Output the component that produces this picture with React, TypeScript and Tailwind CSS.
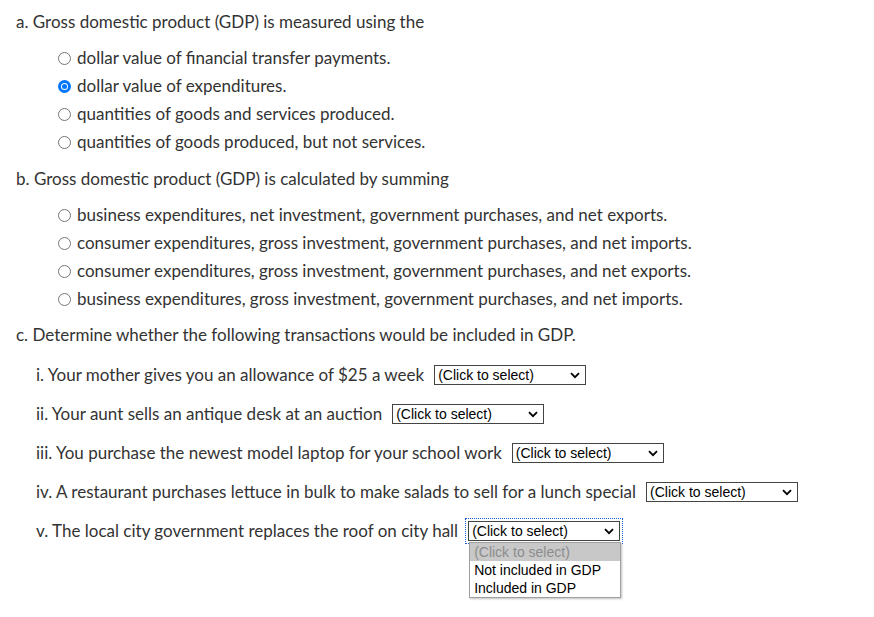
import type { ReactNode } from "react"

const partA = [
  "dollar value of financial transfer payments.",
  "dollar value of expenditures.",
  "quantities of goods and services produced.",
  "quantities of goods produced, but not services.",
]

const partB = [
  "business expenditures, net investment, government purchases, and net exports.",
  "consumer expenditures, gross investment, government purchases, and net imports.",
  "consumer expenditures, gross investment, government purchases, and net exports.",
  "business expenditures, gross investment, government purchases, and net imports.",
]

const partC = [
  "i. Your mother gives you an allowance of $25 a week",
  "ii. Your aunt sells an antique desk at an auction",
  "iii. You purchase the newest model laptop for your school work",
  "iv. A restaurant purchases lettuce in bulk to make salads to sell for a lunch special",
  "v. The local city government replaces the roof on city hall",
]

/** 单选圆点 */
function Radio({ checked }: { checked?: boolean }) {
  return checked ? (
    <span className="inline-flex w-[13px] h-[13px] rounded-full bg-[#0075ff] items-center justify-center shrink-0">
      <span className="w-[7px] h-[7px] rounded-full bg-white flex items-center justify-center">
        <span className="w-[5px] h-[5px] rounded-full bg-[#0075ff]" />
      </span>
    </span>
  ) : (
    <span className="inline-block w-[13px] h-[13px] rounded-full border border-[#767676] bg-white shrink-0" />
  )
}

function Chevron() {
  return (
    <svg width="10" height="7" viewBox="0 0 10 7" className="shrink-0">
      <path d="M1 1.2 L5 5.2 L9 1.2" fill="none" stroke="#000" strokeWidth="1.8" />
    </svg>
  )
}

/** 模拟原生下拉框 */
function Select({ focused, children }: { focused?: boolean; children?: ReactNode }) {
  const box = (
    <div className="w-[152px] h-[20px] border border-[#444] bg-white flex items-center justify-between pl-[3px] pr-[5px] text-[14px] text-black leading-none font-['Liberation_Sans',Arial,sans-serif]">
      <span>(Click to select)</span>
      <Chevron />
    </div>
  )
  if (!focused) return box
  return (
    <div className="relative">
      <div className="outline outline-1 outline-dotted outline-[#1a5fd0] outline-offset-[2px]">{box}</div>
      {children}
    </div>
  )
}

function Question({ label, children }: { label: string; children: ReactNode }) {
  return (
    <div>
      <p className="leading-[24px]">{label}</p>
      <div className="pl-[42px] pt-[10px] flex flex-col">{children}</div>
    </div>
  )
}

function Option({ text, checked }: { text: string; checked?: boolean }) {
  return (
    <div className="flex items-center gap-[6px] h-[28px]">
      <Radio checked={checked} />
      <span>{text}</span>
    </div>
  )
}

export default function App() {
  return (
    <div className="w-[874px] h-[617px] bg-white text-[#333] text-[17px] font-['Lato','Noto_Sans',sans-serif] pl-[16px] pt-[10px] flex flex-col">
      <Question label="a. Gross domestic product (GDP) is measured using the">
        {partA.map((t, i) => (
          <Option key={t} text={t} checked={i === 1} />
        ))}
      </Question>
      <div className="mt-[11px]">
        <Question label="b. Gross domestic product (GDP) is calculated by summing">
          {partB.map((t) => (
            <Option key={t} text={t} />
          ))}
        </Question>
      </div>
      <div className="mt-[10px]">
        <p className="leading-[24px]">c. Determine whether the following transactions would be included in GDP.</p>
        <div className="pl-[20px] pt-[18px] flex flex-col gap-[19px]">
          {partC.map((t, i) => (
            <div key={t} className="flex items-center gap-[10px] h-[20px]">
              <span>{t}</span>
              {i === 4 ? (
                <Select focused>
                  <div className="absolute left-[1px] top-[21px] w-[152px] bg-white border border-[#a0a0a0] shadow-[1px_1px_2px_rgba(0,0,0,0.25)] text-[14px] text-black font-['Liberation_Sans',Arial,sans-serif] leading-[18px]">
                    <div className="bg-[#c8c8c8] text-[#8c8c8c] pl-[4px]">(Click to select)</div>
                    <div className="pl-[4px]">Not included in GDP</div>
                    <div className="pl-[4px]">Included in GDP</div>
                  </div>
                </Select>
              ) : (
                <Select />
              )}
            </div>
          ))}
        </div>
      </div>
    </div>
  )
}
